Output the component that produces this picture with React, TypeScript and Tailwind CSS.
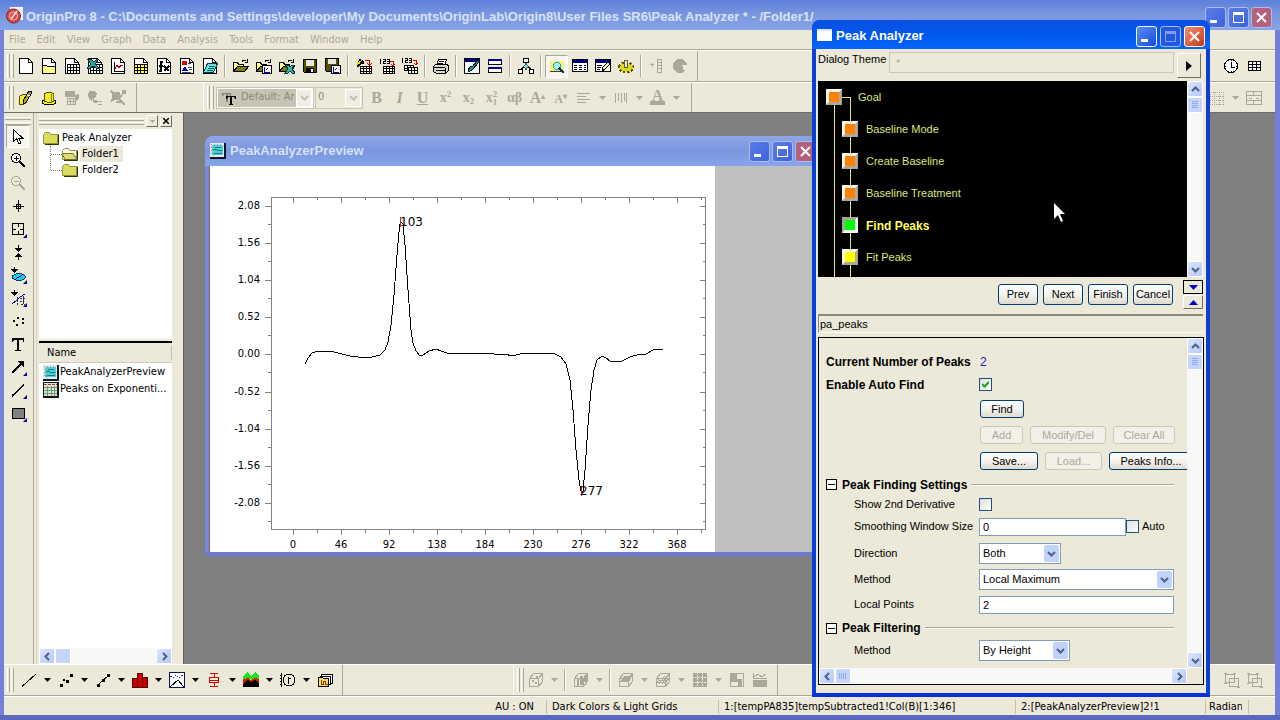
import { useState } from "react"
import type { ReactNode } from "react"
import clsx from "clsx"

const TAHOMA = "font-['DejaVu_Sans_Condensed','DejaVu_Sans',sans-serif]"
const SANS = "font-['Liberation_Sans',Arial,sans-serif]"

const page = (
  <>
    <path d="M1.5 .5h9l4 4v11h-13z" fill="#fff" stroke="#000" />
    <path d="M10.5 .5v4h4" fill="none" stroke="#000" />
  </>
)

const grid = (
  <>
    <path d="M3 6h13v10h-13z" fill="#fff" />
    <path d="M3.5 6.5h12v9h-12zM3 9.5h13M3 12.5h13M6.5 6v10M9.5 6v10M12.5 6v10" fill="none" stroke="#000" />
  </>
)

const smallGrid = (
  <>
    <path d="M4 9h12v7h-12z" fill="#fff" />
    <path d="M4.5 8.5h11v7h-11zM4 10.5h12M4 13.5h12M7.5 8v8M10.5 8v8M13.5 8v8" fill="none" stroke="#000" />
  </>
)

const openFolder = (
  <>
    <path d="M.5 13.5v-9h4l1 2h5v3h-7l-3 4" fill="#ffff80" stroke="#000" />
    <path d="M.5 13.5l4-5h11l-4 5z" fill="#808000" stroke="#000" />
    <path d="M9 3.5q2.5-3 4.5 0M14.5 1v3h-3" fill="none" stroke="#000" />
  </>
)

const cube = <path d="M1.5 6.5l4-5h9v8l-4 5h-9zM1.5 6.5h9l4-5M10.5 6.5v8" fill="none" stroke="#aca899" />

const ICONS: Record<string, ReactNode> = {
  newProject: page,
  newFolder: (
    <>
      {page}
      <path d="M1.5 7.5h4l1 1h8v7h-13z" fill="#ffff80" stroke="#000" />
    </>
  ),
  newBook: (
    <>
      {page}
      {grid}
    </>
  ),
  newExcel: (
    <>
      {page}
      {grid}
      <path d="M0 1h4l3 3 3-3h2l-4 5 4 4h-3l-3-2-3 2H0l4-4z" fill="#30a0a0" stroke="#003838" />
    </>
  ),
  newGraph: (
    <>
      {page}
      <path d="M4.5 4v9.5h9" fill="none" stroke="#000" />
      <path d="M5 11l2-4 2 3 2-3 2 1" fill="none" stroke="#c00000" />
    </>
  ),
  newMatrix: (
    <>
      {page}
      <path d="M1 6h14v9h-14z" fill="#ffff40" />
      <path d="M1.5 6.5h13v9h-13zM1 9.5h14M1 12.5h14M4.5 6v10M7.5 6v10M11.5 6v10" fill="none" stroke="#000" />
    </>
  ),
  newFunction: (
    <>
      {page}
      <path d="M7 4H5v9H3M3 8h4M8 8l5 5M13 8l-5 5" fill="none" stroke="#000" strokeWidth="2" />
    </>
  ),
  newLayout: (
    <>
      {page}
      <path d="M3 3h5v4H3z" fill="#e00000" />
      <path d="M3 13l3-5 3 5z" fill="#0000c0" />
      <path d="M9 5.5h3M9 9.5h4M10 11.5h3M3 14.5h9" stroke="#404080" />
    </>
  ),
  newNotes: (
    <>
      {page}
      <path d="M5.5 5.5h10l-4 9h-10z" fill="#70e0e0" stroke="#004040" />
      <path d="M7 8.5h6M6 10.5h6M5 12.5h6" stroke="#006060" />
    </>
  ),
  open: openFolder,
  openTemplate: (
    <>
      {openFolder}
      <path d="M6.5 7.5h9v8h-9z" fill="#fff" stroke="#000" />
      <path d="M8 9v5h6M10 12l2-2" stroke="#0000c0" fill="none" />
    </>
  ),
  openExcel: (
    <>
      {openFolder}
      <path d="M6 7h3l2 2 2-2h3l-3 4 3 4h-3l-2-2-2 2H6l3-4z" fill="#40b0b0" stroke="#003838" />
    </>
  ),
  save: (
    <>
      <path d="M1.5 1.5h13v13h-12l-1-1z" fill="#505000" stroke="#000" />
      <path d="M4 2h8v6H4z" fill="#e8e8d8" />
      <path d="M4 10h8v4H4z" fill="#000" />
      <path d="M9 11h2v3H9z" fill="#fff" />
    </>
  ),
  saveTemplate: (
    <>
      <path d="M.5 .5h13v13h-12l-1-1z" fill="#505000" stroke="#000" />
      <path d="M3 1h8v5H3z" fill="#e8e8d8" />
      <path d="M6.5 7.5h9v8h-9z" fill="#fff" stroke="#000" />
      <path d="M8 9v5h6M10 12l2-2" stroke="#0000c0" fill="none" />
    </>
  ),
  importWizard: (
    <>
      {smallGrid}
      <path d="M1 9l6-6M2 4h1M4 1v2M6 5h2" stroke="#000" strokeWidth="2" />
      <path d="M1 6l3-2" stroke="#e0e000" strokeWidth="2" />
      <path d="M9 2.5h4.5v4M11 5l2.5 2 2.5-2" stroke="#d00000" fill="none" />
    </>
  ),
  importSingle: (
    <>
      {smallGrid}
      <path d="M1.5 1v5M4 1.5h2v2h-2v2h2.5M8 1.5h2v4h-2M8 3.5h2" stroke="#000" fill="none" />
      <path d="M11 3.5h3v4M12 6l2 2 2-2" stroke="#d00000" fill="none" />
    </>
  ),
  importMultiple: (
    <>
      <path d="M2.5 7.5h9v5h-9zM5.5 7v6M8.5 7v6M2 10.5h9" fill="#fff" stroke="#000" />
      <path d="M6.5 9.5h9v6h-9zM9.5 9v7M12.5 9v7M6 12.5h10" fill="#fff" stroke="#000" />
      <path d="M.5 0v5M3 .5h2v2h-2v2h2.5M7 .5h2v4h-2M7 2.5h2" stroke="#000" fill="none" />
      <path d="M11 2.5h3v4M12 5l2 2 2-2" stroke="#d00000" fill="none" />
    </>
  ),
  print: (
    <>
      <path d="M5.5 1.5h8l-2 6h-8z" fill="#fff" stroke="#000" />
      <path d="M.5 8.5l2-2h12l1 2v4l-3 3h-9l-3-2z" fill="#d8d8c8" stroke="#000" />
      <path d="M6 3.5h5M5 5.5h5M1 9.5h11M3 12.5h9M12.5 9.5v5" stroke="#000" fill="none" />
    </>
  ),
  refresh: (
    <>
      <path d="M.5 .5h15v15h-15z" fill="#fff" stroke="#000" />
      <path d="M1 1h14v3H1z" fill="#000080" />
      <path d="M4 13q2-6 4-4l6-7 1 2-6 7q-2 3-5 2z" fill="#308888" stroke="#002828" />
    </>
  ),
  duplicate: (
    <>
      <path d="M1.5 1.5h13v5h-13zM1.5 9.5h13v5h-13z" fill="#fff" stroke="#000" />
      <path d="M1 2h14M1 10h14" stroke="#000080" strokeWidth="2" />
    </>
  ),
  explorer: (
    <>
      <path d="M5.5 .5h5v4h-5zM.5 11.5h4v4h-4zM11.5 11.5h4v4h-4z" fill="#fff" stroke="#000" />
      <path d="M8 5v2M6 9l-4 3M10 9l4 3" stroke="#000" />
      <path d="M8 5.5l2.5 3-2.5 3-2.5-3z" fill="#80e0e0" stroke="#306060" />
    </>
  ),
  results: (
    <>
      <path d="M1 3h14v10H1z" fill="#f4f080" />
      <path d="M1 13.5h14" stroke="#404020" />
      <circle cx="8" cy="8" r="3.5" fill="#a0f0f0" stroke="#30a0a0" />
      <path d="M10 10l5 5" stroke="#003060" strokeWidth="2" />
    </>
  ),
  table: (
    <>
      <path d="M.5 1.5h15v12h-15z" fill="#fff" stroke="#000" />
      <path d="M1 2h14v3H1z" fill="#000080" />
      <path d="M2 7.5h3M7 7.5h3M12 7.5h2M2 9.5h3M7 9.5h3M12 9.5h2M2 11.5h3M7 11.5h3M12 11.5h2" stroke="#000" />
    </>
  ),
  script: (
    <>
      <path d="M.5 1.5h15v12h-15z" fill="#fff" stroke="#000" />
      <path d="M1 2h14v3H1z" fill="#000080" />
      <path d="M2 7.5h5M2 9.5h4M2 11.5h3" stroke="#000" />
      <path d="M7 13l1-4 5-5 2 2-5 5z" fill="#ffff90" stroke="#000" />
    </>
  ),
  gear: (
    <>
      <path d="M1 8l3-3h8l3 3-1 4-3 2H5l-3-2z" fill="#dcd820" />
      <path d="M1 8l3-3h8l3 3-1 4-3 2H5l-3-2z" fill="none" stroke="#605800" strokeWidth="2" strokeDasharray="2 2" />
      <path d="M6.5 2.5h3v7h-3z" fill="#e8e8d8" stroke="#606040" />
    </>
  ),
  addColumn: (
    <path d="M1 6.5h4M3 4.5v4M8.5 1.5h4v13h-4zM8 4.5h5M8 7.5h5M8 10.5h5" fill="none" stroke="#aca899" />
  ),
  rescale: (
    <>
      <circle cx="8" cy="8" r="7" fill="#aca899" />
      <path d="M8 8h3v4h4V7h-4z" fill="#ece9d8" />
    </>
  ),
  pencilYellow: (
    <>
      <path d="M1.5 6.5l3-2h4v8l-3 2h-4z" fill="#f0f020" stroke="#505000" />
      <path d="M5 13l1-4 5-8 3 1-5 9-3 3z" fill="#a8a020" stroke="#000" />
      <path d="M9 5l3 1" stroke="#fff" />
    </>
  ),
  hatYellow: (
    <>
      <ellipse cx="8" cy="12" rx="7" ry="3" fill="#ffff00" stroke="#000" />
      <path d="M3.5 11V4q4-4 9 0v7q-4 3-9 0z" fill="#f4f020" stroke="#505000" />
      <path d="M10 4v8M12 4v7" stroke="#808000" />
    </>
  ),
  dimRows: (
    <>
      <path d="M1 1h10v6H1zM11 5l4-1v5l-4 3z" fill="#aca899" />
      <path d="M3.5 8.5h8v6h-8zM3 11.5h9M6.5 8v7M9.5 8v7" fill="none" stroke="#aca899" />
    </>
  ),
  dimBulb: (
    <>
      <path d="M2 1h6l2 3-2 4-4 3-3-5zM5 9l2 4h3l1-2z" fill="#aca899" />
      <path d="M11 11.5h4M11 14.5h4" stroke="#aca899" />
    </>
  ),
  dimScatter: (
    <>
      <path d="M2 2h8v8H2z" fill="#aca899" />
      <path d="M1 1l4 4M1 11l6-4M9 8l6-7M8 8l7 7M12 1h3v3M6 12h5" fill="none" stroke="#aca899" strokeWidth="2" />
    </>
  ),
  alignLeft: <path d="M1 3.5h13M1 6.5h9M1 9.5h13M1 12.5h9" stroke="#aca899" />,
  bars: <path d="M2.5 3v10M5.5 3v8M8.5 3v10M11.5 3v8M13.5 3v10" stroke="#aca899" />,
  clock: (
    <>
      <circle cx="8" cy="8" r="6.5" fill="#fff" stroke="#000" />
      <path d="M8.5 4v5h3M8 2.5h1M8 13.5h1M2.5 8v1M13.5 8v1" fill="none" stroke="#000" />
    </>
  ),
  table3: <path d="M2.5 3.5h12v9h-12zM2 6.5h13M2 9.5h13M6.5 3v10M10.5 3v10" fill="#fff" stroke="#000" />,
  dimDots: <path d="M1.5 2.5h13v12h-13zM1 6.5h14M1 10.5h14M5.5 2v13M10.5 2v13" fill="none" stroke="#aca899" strokeDasharray="1 1" />,
  dimMerge: <path d="M.5 1.5h15v13h-15zM0 5.5h16M0 10.5h16M7.5 1v4M7.5 11v4M3 8h3M10 8h3" fill="none" stroke="#aca899" />,
  pointer: <path d="M3.5 .5v12l3-3 2.5 5.5 2-1-2.5-5h4z" fill="#fff" stroke="#000" />,
  zoomIn: (
    <>
      <circle cx="6" cy="6" r="4.5" fill="#fff" stroke="#000" />
      <path d="M4 6.5h5M6.5 4v5" stroke="#000" />
      <path d="M9 9l6 6" stroke="#000" strokeWidth="2" />
    </>
  ),
  zoomOut: (
    <>
      <circle cx="6" cy="6" r="4.5" fill="none" stroke="#aca899" />
      <path d="M4 6.5h5" stroke="#aca899" />
      <path d="M9 9l6 6" stroke="#aca899" strokeWidth="2" />
    </>
  ),
  reader: <path d="M8.5 2v12M3 8.5h11M6.5 6.5h4v4h-4z" fill="none" stroke="#000" />,
  selector: <path d="M2.5 2.5h11v11h-11zM8.5 2v4M8.5 10v4M2 8.5h4M10 8.5h4" fill="none" stroke="#000" />,
  cursorData: (
    <>
      <path d="M8.5 1v4M8.5 12v4" stroke="#000" />
      <path d="M5 4h7L8.5 8zM5 13h7l-3.500-4z" fill="#000" />
    </>
  ),
  mask: (
    <>
      <ellipse cx="9" cy="10" rx="6.5" ry="3.5" fill="#20d0e8" stroke="#104060" />
      <path d="M4 13l10-6" stroke="#0000a0" />
      <path d="M4.5 0v3" stroke="#000" />
      <path d="M1 2h7L4.500 6z" fill="#000" />
    </>
  ),
  drawData: (
    <>
      <path d="M2 14l5-4 3-3 5-3" stroke="#0000a0" fill="none" />
      <path d="M7.5 7v8M10 8h5M10 11h4M11 14h4M13 6v9" stroke="#303040" strokeDasharray="2 1" fill="none" />
      <path d="M4.5 0v3" stroke="#000" />
      <path d="M1 2h7L4.500 6z" fill="#000" />
    </>
  ),
  dots: <path d="M3 7h2v2H3zM7 4h2v2H7zM12 5h2v2h-2zM12 9h2v2h-2zM6 11h2v2H6z" fill="#000" />,
  text: <path d="M2 2h12v4h-1q0-2-2-2H9v9q0 1 2 1v1H5v-1q2 0 2-1V4H5Q3 4 3 6H2z" fill="#000" />,
  arrow: (
    <>
      <path d="M2 14L11 5" stroke="#000" strokeWidth="2" />
      <path d="M7 2h7v7z" fill="#000" />
    </>
  ),
  line: <path d="M2 14L14 3" stroke="#000" strokeWidth="1.5" />,
  rect: <path d="M2.5 3.5h12v10h-12z" fill="#808080" stroke="#000" />,
  pLine: <path d="M1 14.5L15 2" stroke="#000" />,
  pScatter: <path d="M2 12h3v3H2zM8 8h3v3H8zM12 2h3v3h-3zM5 7h2v2H5z" fill="#000" />,
  pLineSymbol: (
    <>
      <path d="M3 13L14 3" stroke="#000" />
      <path d="M2 12h3v3H2zM7 7h3v3H7zM12 2h3v3h-3z" fill="#000" />
    </>
  ),
  pColumn: <path d="M.5 6.5h5v9h-5zM5.5 1.5h5v14h-5zM10.5 5.5h5v10h-5z" fill="#c80000" stroke="#600000" />,
  pMulti: (
    <>
      <path d="M.5 .5h15v15h-15z" fill="#fff" stroke="#101060" />
      <path d="M1 15l8-7 6 7" fill="none" stroke="#000" />
      <path d="M1 4l3 2 3-3 3 3 4-3" fill="none" stroke="#2020a0" strokeDasharray="2 1" />
    </>
  ),
  pBox: <path d="M4 1.5h8M8 1v4M3.5 5.5h9v5h-9zM3 8.5h10M8 10v5M4 14.5h8" fill="none" stroke="#d00000" />,
  pArea: (
    <>
      <path d="M0 7V4l4-4 4 4 4-4 4 4v4z" fill="#20e020" />
      <path d="M0 7l5-1 3 2 4-2 4 1v8H0z" fill="#d02000" />
      <path d="M0 12l5-4 3 2 4-2 4 4v3H0z" fill="#000" />
    </>
  ),
  pPolar: (
    <>
      <circle cx="9" cy="8" r="6" fill="none" stroke="#000" />
      <path d="M1.5 1v14M0 3.5h2M0 6.5h2M0 9.5h2M0 12.5h2M8.5 5v7M8 6.5h3" stroke="#000" fill="none" />
    </>
  ),
  pTemplates: (
    <>
      <path d="M4.5 2.5h11v9h-11z" fill="#fff" stroke="#000" />
      <path d="M3.5 4.5h10v8h-10z" fill="#fff" stroke="#000" />
      <path d="M1.5 5.5h4l1 1h5v8h-10z" fill="#ffd860" stroke="#000" />
      <path d="M4.5 8v4h2v-3h2v3h2" fill="none" stroke="#804000" />
    </>
  ),
  c3dScatter: (
    <>
      {cube}
      <path d="M4 8h2v2H4zM7 10h2v2H7zM8 4h2v2H8z" fill="#aca899" />
    </>
  ),
  c3dBars: (
    <>
      {cube}
      <path d="M4 7h2v7H4zM7 4h3v9H7zM11 3h3v7h-3z" fill="#aca899" />
    </>
  ),
  c3dSurface: (
    <>
      {cube}
      <path d="M2 10l4-6h8l-3 6z" fill="#aca899" />
    </>
  ),
  c3dMesh: (
    <>
      {cube}
      <path d="M2 10h9l3-4H5zM4 12l6-8M7 12l5-8M3 8h10" fill="none" stroke="#aca899" />
    </>
  ),
  contour: (
    <>
      <path d="M1 1h14v14H1z" fill="#aca899" />
      <path d="M0 5.5h16M0 10.5h16M5.5 0v16M10.5 0v16" stroke="#ece9d8" strokeDasharray="2 1" />
    </>
  ),
  image: (
    <>
      <path d="M1.5 1.5h13v13h-13z" fill="none" stroke="#aca899" />
      <path d="M2 2h6v5h5v7H9v-4H2z" fill="#aca899" />
    </>
  ),
  profile: (
    <>
      <path d="M1 8h14v7H1z" fill="#aca899" />
      <path d="M1.5 1v5M2 5l4-3 4 3 4-3M1 6.5h14" fill="none" stroke="#aca899" />
    </>
  ),
  dimGroup: (
    <path d="M1.5 2.5h9v8h-9zM5.5 6.5h9v8h-9zM0 1.5h3M9 1.5h3M13 15.5h3M0 11.5h3" fill="none" stroke="#aca899" />
  ),
}

function Icon({ name }: { name: string }) {
  return (
    <svg width="16" height="16" viewBox="0 0 16 16" shapeRendering="crispEdges" aria-hidden="true">
      {ICONS[name]}
    </svg>
  )
}

function Tool({ name, pressed, corner }: { name: string; pressed?: boolean; corner?: boolean }) {
  return (
    <button
      type="button"
      aria-label={name}
      className={clsx(
        "relative flex h-[23px] w-[23px] shrink-0 items-center justify-center",
        pressed && "border border-t-[#aca899] border-l-[#aca899] border-r-white border-b-white bg-[#f6f5ee]"
      )}
    >
      <Icon name={name} />
      {corner && (
        <svg className="absolute right-0.5 bottom-0.5" width="4" height="4" viewBox="0 0 4 4" aria-hidden="true">
          <path d="M4 0v4H0z" fill="#000080" />
        </svg>
      )}
    </button>
  )
}

function Divider() {
  return (
    <span className="flex w-2 shrink-0 justify-center self-stretch py-1">
      <span className="w-0.5 border-l border-[#aca899] bg-white" />
    </span>
  )
}

function Grip() {
  return (
    <span className="ml-[3px] flex shrink-0 gap-px self-stretch py-[3px]">
      <span className="w-[3px] border-l border-r border-l-white border-r-[#aca899]" />
      <span className="w-[3px] border-l border-r border-l-white border-r-[#aca899]" />
    </span>
  )
}

function DropArrow({ dim }: { dim?: boolean }) {
  return (
    <button type="button" aria-label="More" className="flex h-[23px] w-[14px] shrink-0 items-center justify-center">
      <svg width="7" height="4" viewBox="0 0 7 4" aria-hidden="true">
        <path d="M0 0h7L3.5 4z" fill={dim ? "#aca899" : "#000"} />
      </svg>
    </button>
  )
}

// Entries of a toolbar: an icon name, "|" for a divider, "v" / "V" for a dimmed / black arrow
function Tools({ items, pressed }: { items: string[]; pressed?: string }) {
  return (
    <>
      {items.map((item, i) => {
        if (item === "|") return <Divider key={i} />
        if (item === "v" || item === "V") return <DropArrow key={i} dim={item === "v"} />
        return <Tool key={i} name={item} pressed={item === pressed} />
      })}
    </>
  )
}

function TextTool({ label, small, children }: { label: string; small?: boolean; children: ReactNode }) {
  return (
    <button
      type="button"
      aria-label={label}
      className={clsx(
        "flex h-[23px] w-[23px] shrink-0 items-center justify-center font-['Liberation_Serif',serif] font-bold text-[#aca899]",
        small ? "text-sm" : "text-base"
      )}
    >
      <span>{children}</span>
    </button>
  )
}

function WinButton({ kind, tone }: { kind: "min" | "max" | "close"; tone: "active" | "dim" | "off" }) {
  return (
    <button
      type="button"
      aria-label={kind}
      className={clsx(
        "flex h-[21px] w-[21px] shrink-0 items-center justify-center rounded-[3px] border",
        tone === "active" && "border-white",
        tone !== "active" && "border-[#a9bdf0]",
        kind === "close" && tone === "active" && "bg-gradient-to-br from-[#f09070] to-[#c83010]",
        kind === "close" && tone === "dim" && "bg-[#b5607c]",
        kind !== "close" && tone === "active" && "bg-gradient-to-br from-[#5a8cf5] to-[#1a48d8]",
        kind !== "close" && tone === "dim" && "bg-gradient-to-br from-[#5a7ce8] to-[#3e62dc]",
        kind !== "close" && tone === "off" && "border-[#5b8cf0] bg-[#2358dc]"
      )}
    >
      <svg width="13" height="13" viewBox="0 0 13 13" aria-hidden="true">
        {kind === "min" && <path d="M1 9h7v3H1z" fill="#fff" />}
        {kind === "max" && (
          <path
            d="M1 1h11v11H1zM2 4v7h9V4z"
            fillRule="evenodd"
            fill={tone === "off" ? "#7fa0f0" : "#fff"}
          />
        )}
        {kind === "close" && <path d="M2 2l9 9M11 2l-9 9" stroke="#fff" strokeWidth="2" />}
      </svg>
    </button>
  )
}

const CHEVRONS = { up: "M1 6l3.5-3.5L8 6", down: "M1 3l3.5 3.5L8 3", left: "M6 1L2.5 4.5L6 8", right: "M3 1l3.5 3.5L3 8" }

function ScrollButton({ dir }: { dir: keyof typeof CHEVRONS }) {
  return (
    <button
      type="button"
      aria-label={`Scroll ${dir}`}
      className="flex h-4 w-4 shrink-0 items-center justify-center rounded-[2px] border border-white bg-gradient-to-br from-[#dbe5fe] to-[#b6c8f8]"
    >
      <svg width="9" height="9" viewBox="0 0 9 9" aria-hidden="true">
        <path d={CHEVRONS[dir]} fill="none" stroke="#4d6185" strokeWidth="2" />
      </svg>
    </button>
  )
}

function ScrollBar({ horizontal, plain }: { horizontal?: boolean; plain?: boolean }) {
  return (
    <div className={clsx("flex shrink-0 bg-[#f8f8f6]", horizontal ? "h-4 w-full flex-row" : "w-4 flex-col")}>
      <ScrollButton dir={horizontal ? "left" : "up"} />
      <span className="flex h-4 w-4 shrink-0 items-center justify-center rounded-[2px] border border-white bg-[#c6d5fc]">
        {!plain && (
          <svg width="8" height="8" viewBox="0 0 8 8" shapeRendering="crispEdges" aria-hidden="true">
            <path
              d={horizontal ? "M.5 1v6M2.5 1v6M4.5 1v6M6.5 1v6" : "M1 .5h6M1 2.5h6M1 4.5h6M1 6.5h6"}
              stroke="#8fa9ea"
            />
          </svg>
        )}
      </span>
      <span className="flex-1" />
      <ScrollButton dir={horizontal ? "right" : "down"} />
    </div>
  )
}

function TitleBar() {
  return (
    <header className="flex h-[30px] shrink-0 items-center bg-gradient-to-b from-[#5c80da] via-[#7a96df] to-[#86a5ea] pr-2 pl-1.5">
      <svg width="17" height="17" viewBox="0 0 17 17" aria-hidden="true">
        <path d="M4 0h13v13H4z" fill="#f4f4fa" />
        <circle cx="7.5" cy="9" r="7" fill="#d84a48" stroke="#802028" />
        <circle cx="7.5" cy="9" r="4" fill="none" stroke="#f8b8b0" />
        <path d="M5 12l6-8" stroke="#ffe8e0" strokeWidth="1.5" />
      </svg>
      <h1 className={clsx("ml-[3px] flex-1 overflow-hidden pt-1 text-[13px] leading-5 font-bold whitespace-nowrap text-[#d6e2f8]", SANS)}>
        OriginPro 8 - C:\Documents and Settings\developer\My Documents\OriginLab\Origin8\User Files SR6\Peak Analyzer * -
        /Folder1/
      </h1>
      <div className="flex gap-0.5 pt-1">
        <WinButton kind="min" tone="dim" />
        <WinButton kind="max" tone="dim" />
        <WinButton kind="close" tone="dim" />
      </div>
    </header>
  )
}

const MENUS = ["File", "Edit", "View", "Graph", "Data", "Analysis", "Tools", "Format", "Window", "Help"]

function MenuBar() {
  return (
    <nav className="flex h-5 shrink-0 items-center gap-[11px] border-b border-[#aca899] pt-0.5 pl-[5px] text-[11px] text-[#aca899]">
      {MENUS.map((menu) => (
        <button key={menu} type="button">
          {menu}
        </button>
      ))}
    </nav>
  )
}

const STANDARD = [
  "newProject", "newFolder", "newBook", "newExcel", "newGraph", "newMatrix", "newFunction", "newLayout", "newNotes", "|",
  "open", "openTemplate", "openExcel", "save", "saveTemplate", "|",
  "importWizard", "importSingle", "importMultiple", "|", "print", "|", "refresh", "duplicate", "|", "explorer", "|",
  "results", "table", "script", "gear", "|", "addColumn", "rescale",
]

function DimArrowBox() {
  return (
    <span className="pointer-events-none absolute top-px right-px bottom-px flex w-4 items-center justify-center border border-white bg-[#f0eee2]">
      <svg width="9" height="9" viewBox="0 0 9 9" aria-hidden="true">
        <path d={CHEVRONS.down} fill="none" stroke="#c4c0b0" strokeWidth="2" />
      </svg>
    </span>
  )
}

function Toolbars() {
  return (
    <>
      <div className="flex h-8 shrink-0 items-center border-t border-b border-t-white border-b-[#aca899]">
        <Grip />
        <Tools items={STANDARD} pressed="results" />
        <span className="ml-1.5 self-stretch border-r border-[#aca899]" />
        <div className="ml-auto flex pr-2.5">
          <Tools items={["clock", "table3"]} />
        </div>
      </div>
      <div className="flex h-[31px] shrink-0 items-center border-t border-b border-t-white border-b-[#716f64]">
        <Grip />
        <Tools items={["pencilYellow", "hatYellow", "dimRows", "dimBulb", "dimScatter"]} />
        <span className="ml-[7px] self-stretch border-r border-[#aca899]" />
        <span className="ml-[66px] self-stretch border-r border-white" />
        <Grip />
        <div className="relative ml-0.5 h-[22px] w-[98px] border border-[#c8c4b4] bg-white p-px">
          <select disabled aria-label="Font" className="block h-full w-full appearance-none bg-[#c8c4b4] pl-[23px] text-[11px] text-[#8c8878]">
            <option>Default: Ar</option>
          </select>
          <svg className="absolute top-1 left-[5px]" width="14" height="14" viewBox="0 0 14 14" aria-hidden="true">
            <path d="M0 1h9v3H8L7 2H6v8H4V2H2L1 4H0z" fill="#808080" />
            <path d="M4 4h10v3h-1l-1-2h-2v7h1v1H7v-1h1V5H6L5 7H4z" fill="#000" />
          </svg>
          <DimArrowBox />
        </div>
        <div className="relative ml-px h-[22px] w-12 border border-[#c8c4b4]">
          <select disabled aria-label="Font size" className="block h-full w-full appearance-none pl-0.5 text-[11px] text-[#8c8878]">
            <option>0</option>
          </select>
          <DimArrowBox />
        </div>
        <span className="w-0.5" />
        <TextTool label="Bold">B</TextTool>
        <TextTool label="Italic"><i>I</i></TextTool>
        <TextTool label="Underline"><u>U</u></TextTool>
        <TextTool label="Superscript" small>x<sup className="text-[9px]">2</sup></TextTool>
        <TextTool label="Subscript" small>x<sub className="text-[9px]">2</sub></TextTool>
        <TextTool label="Super and subscript" small>
          <span className="flex items-center">
            x
            <span className="flex flex-col text-[9px] leading-[8px]"><span>2</span><span>1</span></span>
          </span>
        </TextTool>
        <TextTool label="Greek" small>αβ</TextTool>
        <TextTool label="Increase font">A<sup className="text-[8px]">▴</sup></TextTool>
        <TextTool label="Decrease font"><span className="text-xs">A<sup className="text-[8px]">▾</sup></span></TextTool>
        <Tools items={["alignLeft", "v", "bars", "v"]} />
        <TextTool label="Font color">
          <span className="block border-b-4 border-[#aca899] px-0.5 text-base leading-[11px]">A</span>
        </TextTool>
        <Tools items={["v"]} />
        <span className="ml-2 self-stretch border-r border-[#aca899]" />
        <div className="ml-auto flex pr-2.5">
          <Tools items={["dimDots", "v", "dimMerge"]} />
        </div>
      </div>
    </>
  )
}

const TOOLBOX: [string, boolean][] = [
  ["pointer", false], ["zoomIn", false], ["zoomOut", false], ["reader", false], ["selector", true],
  ["cursorData", false], ["mask", true], ["drawData", true], ["dots", false], ["text", false],
  ["arrow", true], ["line", true], ["rect", true],
]

function Toolbox() {
  return (
    <aside className="flex w-[30px] shrink-0 flex-col items-center border-r border-[#aca899] pt-1 pr-0.5">
      <span className="mb-0.5 h-[3px] w-[26px] border-t border-b border-t-white border-b-[#aca899]" />
      <span className="h-[3px] w-[26px] border-t border-b border-t-white border-b-[#aca899]" />
      {TOOLBOX.map(([name, corner]) => (
        <Tool key={name} name={name} corner={corner} pressed={name === "pointer"} />
      ))}
    </aside>
  )
}

function Folder({ open }: { open?: boolean }) {
  return (
    <svg width="16" height="14" viewBox="0 0 16 14" aria-hidden="true">
      <path d="M2 13.5h13.500v-10" fill="none" stroke="#303000" />
      <path d="M.5 12.5v-9l2-2h4l1 2h7v9z" fill={open ? "#fbfbe0" : "#dcdc5c"} stroke="#909040" />
      {open && <path d="M3 12.5l-3-6h11l4 6z" fill="#dcdc70" stroke="#707030" />}
    </svg>
  )
}

function PreviewIcon() {
  return (
    <svg width="16" height="16" viewBox="0 0 16 16" shapeRendering="crispEdges" aria-hidden="true">
      <path d="M0 0h16v16H0z" fill="#101828" />
      <path d="M0 0h14v14H0z" fill="#e8e8f0" />
      <path d="M2 2h11v10H2z" fill="#48d0d0" />
      <path d="M5 4.5h6M3 6.5h4M7 7.5h5M4 10.5h8" stroke="#187890" />
      <path d="M1 1.5h12M1.5 1v12M3 12.5h3" stroke="#d08080" strokeDasharray="1 2" />
    </svg>
  )
}

function SheetIcon() {
  return (
    <svg width="16" height="16" viewBox="0 0 16 16" shapeRendering="crispEdges" aria-hidden="true">
      <path d="M0 0h16v16H0z" fill="#101810" />
      <path d="M1 1h13v13H1z" fill="#d8e8d8" />
      <path d="M1 2.5h13" stroke="#c03030" strokeDasharray="3 1" />
      <path d="M1 5.5h13M1 8.5h13M1 11.5h13M4.5 4v10M8.5 4v10M11.5 4v10" stroke="#709870" />
    </svg>
  )
}

const PANE_BUTTON = "flex h-3 w-3 items-center justify-center border border-t-white border-l-white border-r-[#716f64] border-b-[#716f64]"

function ProjectExplorer() {
  return (
    <aside className="mx-0.5 flex w-[145px] shrink-0 flex-col border-l border-[#d8d4c4] pl-0.5 text-[11px]">
      <div className="flex h-4 shrink-0 items-center pr-[9px]">
        <span className="flex flex-1 flex-col gap-px">
          <span className="h-[3px] border-t border-b border-t-white border-b-[#aca899]" />
          <span className="h-[3px] border-t border-b border-t-white border-b-[#aca899]" />
        </span>
        <button type="button" aria-label="Menu" className={clsx("ml-0.5", PANE_BUTTON)}>
          <svg width="5" height="3" viewBox="0 0 5 3" aria-hidden="true"><path d="M0 0h5L2.5 3z" fill="#aca899" /></svg>
        </button>
        <button type="button" aria-label="Close pane" className={clsx("ml-0.5", PANE_BUTTON)}>
          <svg width="6" height="6" viewBox="0 0 6 6" aria-hidden="true"><path d="M0 0l6 6M6 0L0 6" stroke="#000" strokeWidth="1.5" /></svg>
        </button>
      </div>
      <div className="mr-[9px] h-[210px] shrink-0 bg-white pt-px">
        <div className="flex h-4 items-center gap-[3px] pl-1">
          <Folder />
          <span>Peak Analyzer</span>
        </div>
        <div className="flex pl-[11px]">
          <span className="h-6 border-l border-dotted border-[#808080]" />
          <ul>
            <li className="flex h-4 items-center">
              <span className="w-[11px] border-t border-dotted border-[#808080]" />
              <Folder open />
              <span className="ml-0.5 bg-[#ece9d8] px-0.5 pr-1">Folder1</span>
            </li>
            <li className="flex h-4 items-center">
              <span className="w-[11px] border-t border-dotted border-[#808080]" />
              <Folder />
              <span className="ml-0.5 px-0.5">Folder2</span>
            </li>
          </ul>
        </div>
      </div>
      <div className="mt-0.5 mr-[9px] h-0.5 shrink-0 bg-black" />
      <div className="mr-[9px] flex min-h-0 flex-1 flex-col bg-white">
        <div className="flex h-5 shrink-0 items-center border-b border-[#d0ccb8] bg-[#ebe9d9] py-1">
          <span className="flex-1 border-r border-[#c4c0ae] pl-2 leading-[14px]">Name</span>
        </div>
        <ul className="flex-1 overflow-hidden pt-px pl-1">
          <li className="flex h-[17px] items-center gap-px whitespace-nowrap"><PreviewIcon />PeakAnalyzerPreview</li>
          <li className="flex h-[17px] items-center gap-px whitespace-nowrap"><SheetIcon />Peaks on Exponenti...</li>
        </ul>
        <ScrollBar horizontal plain />
      </div>
    </aside>
  )
}

const Y_LABELS = ["2.08", "1.56", "1.04", "0.52", "0.00", "-0.52", "-1.04", "-1.56", "-2.08"]
const X_LABELS = ["0", "46", "92", "138", "184", "230", "276", "322", "368"]

const CURVE =
  "M95 198L98 192L102 187L108 185L116 185L124 186L132 188L140 190L148 191H162L170 189L175 184L178 176L181 159L184 129L187 89L189 66L190 58L191 56L193 58L195 79L198 124L201 164L203 177L206 185L210 190L213 189L219 185L226 183L231 185L240 188L250 187L260 188L268 187L276 188L280 187L284 188L295 188L302 190L310 188L320 187H338L345 188L351 191L356 198L360 214L363 244L366 284L369 314L371 325L373 325L375 304L378 259L381 224L384 204L387 194L392 190L396 192L400 195L406 196L412 195L420 191L430 188L436 188L443 184L448 183L453 184"

function Chart() {
  return (
    <svg width="505" height="386" viewBox="0 0 505 386" className="block shrink-0 bg-white" role="img" aria-label="Peak preview graph">
      <g stroke="#808080" fill="none" shapeRendering="crispEdges">
        <path d="M61.5 31.5h434v332h-434z" />
        {Y_LABELS.map((label, i) => {
          const y = 40.5 + Math.round(i * 37.1)
          return <path key={label} d={`M55 ${y}h6M490 ${y}h5M58 ${y + 18}h3M493 ${y + 18}h2`} />
        })}
        {X_LABELS.map((label, i) => {
          const x = 83.5 + i * 48
          return <path key={label} d={`M${x} 364v5M${x} 32v5M${x + 24} 364v3M${x + 24} 32v2`} />
        })}
      </g>
      <g className="font-['DejaVu_Sans',sans-serif] text-[10px]" fill="#000">
        {Y_LABELS.map((label, i) => (
          <text key={label} x="50" y={43 + Math.round(i * 37.1)} textAnchor="end">{label}</text>
        ))}
        {X_LABELS.map((label, i) => (
          <text key={label} x={83 + i * 48} y="382" textAnchor="middle">{label}</text>
        ))}
      </g>
      <path d={CURVE} fill="none" stroke="#000" shapeRendering="crispEdges" />
      <path d="M190.5 51v10M371.5 320v10" stroke="#e02020" />
      <g className="font-['DejaVu_Sans',sans-serif] text-xs" fill="#000">
        <text x="190" y="60">103</text>
        <text x="370" y="329">277</text>
      </g>
    </svg>
  )
}

function PreviewWindow() {
  return (
    <section className="absolute top-[23px] left-[21px] flex w-[616px] flex-col rounded-t-lg border-b-4 border-[#7078d0] bg-[#7a88d8] px-1">
      <div className="-mx-1 flex h-[30px] items-center rounded-t-lg bg-gradient-to-b from-[#8ea6e6] via-[#7a96df] to-[#86a5ea] px-[5px]">
        <PreviewIcon />
        <h2 className={clsx("ml-1 flex-1 text-[13px] font-bold text-[#d6e2f8]", SANS)}>PeakAnalyzerPreview</h2>
        <div className="flex gap-0.5">
          <WinButton kind="min" tone="dim" />
          <WinButton kind="max" tone="dim" />
          <WinButton kind="close" tone="dim" />
        </div>
      </div>
      <div className="flex overflow-hidden border-l border-[#716f64] bg-[#c0c0c0]">
        <Chart />
      </div>
    </section>
  )
}

const STEPS = [
  { label: "Goal", color: "bg-[#ff8000]" },
  { label: "Baseline Mode", color: "bg-[#ff8000]" },
  { label: "Create Baseline", color: "bg-[#ff8000]" },
  { label: "Baseline Treatment", color: "bg-[#ff8000]" },
  { label: "Find Peaks", color: "bg-[#00ff00]" },
  { label: "Fit Peaks", color: "bg-[#ffff00]" },
]

function StepTree() {
  return (
    <div className="flex h-[196px] bg-black">
      <ol className="relative flex-1 overflow-hidden">
        <svg className="absolute top-0 left-0" width="48" height="196" viewBox="0 0 48 196" shapeRendering="crispEdges" aria-hidden="true">
          <path d="M16.5 16v180M16 16.5h16.5v180" fill="none" stroke="#e4e870" />
        </svg>
        {STEPS.map((step, i) => (
          <li key={step.label} className={clsx("relative flex h-8 items-center", i === 0 ? "pl-2" : "pl-6")}>
            <button type="button" className="flex items-center">
              <span
                className={clsx(
                  "h-4 w-4 border-[3px]",
                  step.label === "Find Peaks"
                    ? "border-t-[#a8a498] border-l-[#a8a498] border-r-white border-b-white"
                    : "border-t-[#f8f4e8] border-l-[#f8f4e8] border-r-[#b0a898] border-b-[#b0a898]",
                  step.color
                )}
              />
              <span
                className={clsx(
                  "pt-px",
                  i === 0 ? "ml-4" : "ml-2",
                  step.label === "Find Peaks" ? "text-xs font-bold text-[#ffff60]" : "text-[11px] text-[#d8e878]"
                )}
              >
                {step.label}
              </span>
            </button>
          </li>
        ))}
      </ol>
      <ScrollBar />
    </div>
  )
}

function XpButton({ children, disabled, className }: { children: ReactNode; disabled?: boolean; className?: string }) {
  return (
    <button
      type="button"
      disabled={disabled}
      className={clsx(
        "flex shrink-0 items-center justify-center rounded-[3px] border whitespace-nowrap",
        disabled
          ? "border-[#c9c7ba] bg-[#f3f1e7] text-[#aca899]"
          : "border-[#003c74] bg-gradient-to-b from-white via-[#f4f3ee] to-[#dedacc] text-black",
        className
      )}
    >
      {children}
    </button>
  )
}

function Row({ label, id, bold, className, children }: { label: string; id?: string; bold?: boolean; className: string; children: ReactNode }) {
  return (
    <div className={clsx("flex items-center", className)}>
      <label htmlFor={id} className={clsx("w-[153px] shrink-0 whitespace-nowrap", bold ? "text-xs font-bold" : "pl-7")}>
        {label}
      </label>
      {children}
    </div>
  )
}

function CheckBox({ id, checked, onChange }: { id: string; checked: boolean; onChange: () => void }) {
  return (
    <span className="relative flex h-[13px] w-[13px] shrink-0">
      <input
        id={id}
        type="checkbox"
        checked={checked}
        onChange={onChange}
        className="h-[13px] w-[13px] appearance-none border border-[#1c5180] bg-gradient-to-br from-[#dcdcd7] to-white"
      />
      {checked && (
        <svg className="pointer-events-none absolute top-[3px] left-[3px]" width="7" height="7" viewBox="0 0 7 7" aria-hidden="true">
          <path d="M0 3l2.5 2.5L7 1" fill="none" stroke="#21a121" strokeWidth="2" />
        </svg>
      )}
    </span>
  )
}

function Select({ id, value, className }: { id: string; value: string; className: string }) {
  return (
    <span className={clsx("relative h-[21px] shrink-0 border border-[#7f9db9] bg-white", className)}>
      <select id={id} className="block h-full w-full appearance-none pl-[3px] outline-none">
        <option>{value}</option>
      </select>
      <span className="pointer-events-none absolute top-px right-px bottom-px flex w-[15px] items-center justify-center rounded-[2px] bg-[#c1d2fb]">
        <svg width="9" height="9" viewBox="0 0 9 9" aria-hidden="true">
          <path d={CHEVRONS.down} fill="none" stroke="#4d6185" strokeWidth="2" />
        </svg>
      </span>
    </span>
  )
}

function Branch({ children, className }: { children: string; className: string }) {
  return (
    <div className={clsx("flex items-center text-xs font-bold", className)}>
      <button type="button" aria-label={`Collapse ${children}`} className="flex h-[11px] w-[11px] items-center justify-center border border-black bg-white">
        <span className="h-px w-[7px] bg-black" />
      </button>
      <h3 className="ml-[5px]">{children}</h3>
      <span className="mr-[13px] ml-1 h-0.5 flex-1 border-t border-[#aca899] bg-white" />
    </div>
  )
}

function Settings() {
  const [autoFind, setAutoFind] = useState(true)
  const [derivative, setDerivative] = useState(false)
  const [autoSize, setAutoSize] = useState(false)
  const [windowSize, setWindowSize] = useState("0")
  const [points, setPoints] = useState("2")

  return (
    <div className="mt-1 mr-0.5 border border-black">
      <div className="flex">
        <form className="min-w-0 flex-1 overflow-hidden pt-3 pb-[7px] pl-[7px]">
          <Row label="Current Number of Peaks" bold className="h-[23px]">
            <output className="pl-px text-xs text-[#2020c0]">2</output>
          </Row>
          <Row label="Enable Auto Find" id="auto-find" bold className="h-[23px]">
            <CheckBox id="auto-find" checked={autoFind} onChange={() => setAutoFind(!autoFind)} />
          </Row>
          <div className="flex h-[26px] items-center pl-[154px]">
            <XpButton className="h-[18px] w-11">Find</XpButton>
          </div>
          <div className="flex h-[26px] items-center gap-[7px] pl-[154px]">
            <XpButton disabled className="h-[18px] w-[43px]">Add</XpButton>
            <XpButton disabled className="h-[18px] w-[76px]">Modify/Del</XpButton>
            <XpButton disabled className="h-[18px] w-[62px]">Clear All</XpButton>
          </div>
          <div className="flex h-[26px] items-center gap-[7px] pl-[154px]">
            <XpButton className="h-[18px] w-[58px]">Save...</XpButton>
            <XpButton disabled className="h-[18px] w-[57px]">Load...</XpButton>
            <XpButton className="h-[18px] w-[84px]">Peaks Info...</XpButton>
          </div>
          <Branch className="h-[21px]">Peak Finding Settings</Branch>
          <Row label="Show 2nd Derivative" id="derivative" className="h-[18px]">
            <CheckBox id="derivative" checked={derivative} onChange={() => setDerivative(!derivative)} />
          </Row>
          <Row label="Smoothing Window Size" id="window-size" className="h-[27px]">
            <input
              id="window-size"
              value={windowSize}
              onChange={(e) => setWindowSize(e.target.value)}
              className="h-[18px] w-[147px] border border-[#7f9db9] bg-white pl-[3px] outline-none"
            />
            <CheckBox id="auto-size" checked={autoSize} onChange={() => setAutoSize(!autoSize)} />
            <label htmlFor="auto-size" className="ml-[3px]">Auto</label>
          </Row>
          <Row label="Direction" id="direction" className="h-[26px]">
            <Select id="direction" value="Both" className="w-[82px]" />
          </Row>
          <Row label="Method" id="method" className="h-[26px]">
            <Select id="method" value="Local Maximum" className="w-[195px]" />
          </Row>
          <Row label="Local Points" id="points" className="h-[25px]">
            <input
              id="points"
              value={points}
              onChange={(e) => setPoints(e.target.value)}
              className="h-[18px] w-[195px] border border-[#7f9db9] bg-white pl-[3px] outline-none"
            />
          </Row>
          <Branch className="h-[22px]">Peak Filtering</Branch>
          <Row label="Method" id="filter" className="h-[22px]">
            <Select id="filter" value="By Height" className="w-[91px]" />
          </Row>
        </form>
        <ScrollBar />
      </div>
      <div className="pr-4">
        <ScrollBar horizontal />
      </div>
    </div>
  )
}

function PeakAnalyzerDialog() {
  return (
    <section
      role="dialog"
      aria-label="Peak Analyzer"
      className={clsx("absolute top-5 right-[70px] flex w-[398px] flex-col rounded-t-lg border-b-4 border-[#0831d9] bg-[#0a3fd8] px-1 text-[11px] text-black", SANS)}
    >
      <div className="-mx-1 flex h-[29px] items-center rounded-t-lg bg-gradient-to-b from-[#0a4fe0] via-[#0058ee] to-[#0664fb] pt-0.5 pr-[5px] pl-[5px]">
        <span className="mb-0.5 h-3 w-[15px] border-t-2 border-[#d8e4f8] bg-white" />
        <h2 className="ml-1 flex-1 text-[13px] font-bold text-white">Peak Analyzer</h2>
        <div className="flex gap-[3px] pt-px">
          <WinButton kind="min" tone="active" />
          <WinButton kind="max" tone="off" />
          <WinButton kind="close" tone="active" />
        </div>
      </div>
      <div className="bg-[#ece9d8] pb-2 pl-0.5">
        <div className="flex h-8 pt-[3px] pr-[5px]">
          <label htmlFor="theme" className="w-[71px] leading-[14px]">Dialog Theme</label>
          <input id="theme" value="*" readOnly className="h-[21px] min-w-0 flex-1 border border-[#c9c7ba] pl-1.5 text-[#aca899] outline-none" />
          <button type="button" aria-label="Theme menu" className="mt-px ml-[3px] flex h-[25px] w-6 items-center justify-center border border-t-white border-l-white border-r-[#716f64] border-b-[#716f64]">
            <svg width="6" height="10" viewBox="0 0 6 10" aria-hidden="true"><path d="M0 0v10l6-5z" fill="#000" /></svg>
          </button>
        </div>
        <div className="pr-[3px]">
          <StepTree />
        </div>
        <div className="flex h-[37px] items-start justify-end gap-[5px] pr-[3px]">
          {["Prev", "Next", "Finish", "Cancel"].map((label) => (
            <XpButton key={label} className="mt-[7px] h-[21px] w-10">{label}</XpButton>
          ))}
          <div className="mt-[3px] ml-[5px] flex flex-col gap-px">
            <button type="button" aria-label="Expand" className="flex h-3.5 w-5 items-center justify-center border border-black">
              <svg width="9" height="5" viewBox="0 0 9 5" aria-hidden="true"><path d="M0 0h9L4.5 5z" fill="#0000c8" /></svg>
            </button>
            <button type="button" aria-label="Collapse" className="flex h-3.5 w-5 items-center justify-center border border-t-white border-l-white border-r-[#716f64] border-b-[#716f64]">
              <svg width="9" height="5" viewBox="0 0 9 5" aria-hidden="true"><path d="M0 5h9L4.5 0z" fill="#0000c8" /></svg>
            </button>
          </div>
        </div>
        <div className="mr-[3px] h-[19px] border-t-2 border-b border-l border-t-[#8c8a7c] border-l-[#8c8a7c] border-b-white pl-px leading-4">pa_peaks</div>
        <Settings />
      </div>
    </section>
  )
}

function PlotToolbar() {
  return (
    <div className="flex h-8 shrink-0 items-center border-t border-b border-t-white border-b-[#aca899]">
      <Grip />
      <span className="w-[3px]" />
      <Tools
        items={[
          "pLine", "V", "pScatter", "V", "pLineSymbol", "V", "pColumn", "V", "pMulti", "V", "pBox", "V", "pArea", "V",
          "pPolar", "V", "pTemplates",
        ]}
      />
      <span className="ml-1.5 self-stretch border-r border-[#aca899]" />
      <span className="ml-[170px] self-stretch border-r border-white" />
      <Grip />
      <Tools
        items={["c3dScatter", "v", "|", "c3dBars", "v", "|", "c3dSurface", "v", "c3dMesh", "v", "contour", "v", "image", "profile"]}
      />
      <span className="ml-1.5 self-stretch border-r border-[#aca899]" />
      <div className="ml-auto flex pr-[9px]">
        <Tools items={["dimGroup", "dimGroup"]} />
      </div>
    </div>
  )
}

function StatusBar() {
  return (
    <footer className="flex h-[19px] shrink-0 items-center border-t border-white pt-0.5 text-[11px] leading-[14px] whitespace-nowrap">
      <span className="w-[543px] border-r border-[#c4c0ae] pr-3 text-right">AU : ON</span>
      <span className="w-[172px] border-r border-[#c4c0ae] pl-[5px]">Dark Colors &amp; Light Grids</span>
      <span className="w-[297px] border-r border-[#c4c0ae] pl-[5px]">1:[tempPA835]tempSubtracted1!Col(B)[1:346]</span>
      <span className="w-[190px] border-r border-[#c4c0ae] pl-[5px]">2:[PeakAnalyzerPreview]2!1</span>
      <span className="w-9 overflow-hidden pl-[3px]">Radian</span>
      <span className="ml-1.5 h-3.5 border-l border-[#c4c0ae]" />
    </footer>
  )
}

export default function App() {
  return (
    <div className={clsx("relative flex h-screen flex-col overflow-hidden bg-[#5a68c0] text-black", TAHOMA)}>
      <TitleBar />
      <div className="mb-[5px] flex min-h-0 flex-1 flex-col border-r-[5px] border-l-4 border-[#7280d8] bg-[#ece9d8]">
        <MenuBar />
        <Toolbars />
        <main className="flex min-h-0 flex-1">
          <Toolbox />
          <ProjectExplorer />
          <div className="relative min-w-0 flex-1 overflow-hidden border-l border-[#606060] bg-[#808080]">
            <PreviewWindow />
          </div>
        </main>
        <PlotToolbar />
        <StatusBar />
      </div>
      <PeakAnalyzerDialog />
      <svg className="pointer-events-none absolute top-[203px] left-[1054px]" width="12" height="20" viewBox="0 0 12 20" aria-hidden="true">
        <path d="M0 0v16l4-4 3 7 2-1-3-7h5z" fill="#fff" />
      </svg>
    </div>
  )
}
